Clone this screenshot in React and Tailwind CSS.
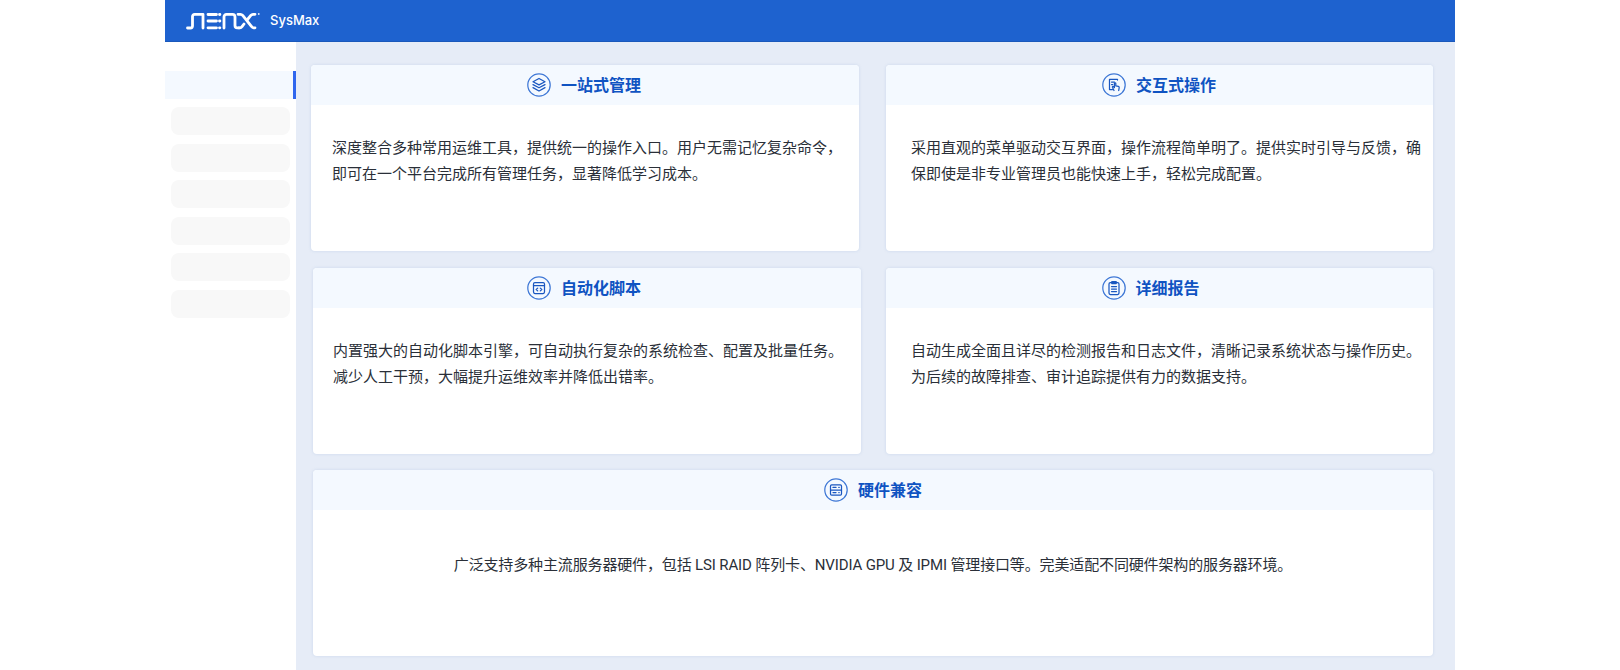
const CJK = "font-['Inter','Noto_Sans_CJK_SC',sans-serif]";

function IconRing({ children }) {
  return (
    <svg width="24" height="24" viewBox="0 0 24 24" fill="none" stroke="#1a57c0" strokeWidth="1.25" strokeLinecap="round" strokeLinejoin="round" className="shrink-0">
      <circle cx="12" cy="12" r="11.2" stroke="#3f78d6" />
      {children}
    </svg>
  );
}

const icons = {
  layers: (
    <>
      <path d="M12 5.5l6 3.2-6 3.2-6-3.2z" />
      <path d="M6 11.6l6 3.2 6-3.2" />
      <path d="M6 14.6l6 3.4 6-3.4" />
    </>
  ),
  touch: (
    <>
      <path d="M15.5 7V6.4H7.5v10.2h3" />
      <path d="M9.5 9h3M9.5 11.5h1.2" />
      <path d="M12 17.5l-1.6-3.2c-.3-.8.6-1.3 1.1-.7l.9 1v-4c0-1 1.4-1 1.4 0v2.2l2.6.6c.6.2.9.6.8 1.2l-.5 2.9" />
    </>
  ),
  code: (
    <>
      <rect x="6.5" y="6.5" width="11" height="11" rx="1.4" />
      <path d="M6.5 9.5h11" />
      <path d="M10.7 12.1l-1.5 1.4 1.5 1.4M13.3 12.1l1.5 1.4-1.5 1.4" />
    </>
  ),
  report: (
    <>
      <rect x="7" y="6.5" width="10" height="12" rx="1.4" />
      <path d="M9.8 5.6h4.4v2h-4.4z" />
      <path d="M9.5 10.5h5M9.5 13h5M9.5 15.5h5" />
    </>
  ),
  server: (
    <>
      <rect x="6.5" y="6.8" width="11" height="10.4" rx="1.2" />
      <path d="M6.5 12h11" />
      <path d="M9 9.4h3M9 14.6h3M14.8 9.4h.4M14.8 14.6h.4" />
    </>
  ),
};

function Card({ icon, title, className, bodyClass, titleClass, headClass, children }) {
  return (
    <section className={`bg-white rounded-[4px] overflow-hidden shadow-[0_0_3px_rgba(120,150,205,0.25)] ${className}`}>
      <header className={`h-[40px] bg-[#f4f9ff] flex items-center justify-center gap-[10px] ${headClass}`}>
        <IconRing>{icons[icon]}</IconRing>
        <h2 className={`text-[16px] leading-[24px] font-bold text-[#0f53c2] ${titleClass}`}>{title}</h2>
      </header>
      <p className={`font-['Roboto','Noto_Sans_CJK_SC',sans-serif] text-[15px] leading-[26px] text-[#2a2f38] ${bodyClass}`}>{children}</p>
    </section>
  );
}

function Logo() {
  return (
    <svg width="74" height="18" viewBox="0 0 74 18" fill="none" stroke="#fff" strokeWidth="2.8" strokeLinecap="round" strokeLinejoin="round">
      <path d="M1.5 16h3c1.4 0 2-.8 2-2V4.5c0-1.4.8-2.2 2.2-2.2h8.3V16" />
      <path d="M22 2.5h8.5M22 9h8.5M22 15.8h8.5" />
      <path d="M33.5 2.5h.4M33.5 9h.4M33.5 15.8h.4" />
      <path d="M38 16V5c0-1.6.9-2.6 2.5-2.6h6c1.6 0 2.5 1 2.5 2.6v8.5c0 1.6.8 2.4 2.2 2.4H53" />
      <path d="M52 2.3h2.5c1 0 1.6.4 2.2 1.1l8.5 10.8c.6.8 1.2 1.6 2.3 1.6h1.5" />
      <path d="M69 2.3h-2c-1 0-1.6.4-2.2 1.1L61.5 7.5M58 12l-1.8 2.4c-.6.8-1.2 1.5-2.2 1.5h-1" />
      <circle cx="72.6" cy="2" r=".4" strokeWidth="1" />
    </svg>
  );
}

export default function App() {
  return (
    <div className={`w-[1620px] h-[670px] bg-white overflow-hidden ${CJK}`}>
      <div className="w-[1290px] h-full ml-[165px] flex flex-col">
        <header className="h-[42px] shrink-0 bg-[#1e62cf] border-b border-[#1a58bb] flex items-center pl-[21px] gap-[10px]">
          <Logo />
          <span className="text-[13px] font-medium text-white">SysMax</span>
        </header>
        <div className="flex flex-1 min-h-0">
          <aside className="w-[131px] shrink-0 pt-[29px] bg-white">
            <div className="h-[28px] bg-[#f4f9ff] border-r-[3px] border-[#2f66ee]" />
            <div className="mt-[8px] px-[6px] flex flex-col gap-[8.6px]">
              <div className="h-[28px] rounded-lg bg-[#f8f8f8]" />
              <div className="h-[28px] rounded-lg bg-[#f8f8f8]" />
              <div className="h-[28px] rounded-lg bg-[#f8f8f8]" />
              <div className="h-[28px] rounded-lg bg-[#f8f8f8]" />
              <div className="h-[28px] rounded-lg bg-[#f8f8f8]" />
              <div className="h-[28px] rounded-lg bg-[#f8f8f8]" />
            </div>
          </aside>
          <main className="flex-1 bg-[#e6ecf7] pt-[23px] pr-[22px] flex flex-col gap-[16px]">
            <div className="flex gap-[27px] pl-[15px]">
              <Card className="w-[548px] h-[186px]" headClass="pr-[2px]" bodyClass="pt-[30px] pl-[21px] pr-[10px]" icon="layers" title="一站式管理">深度整合多种常用运维工具，提供统一的操作入口。用户无需记忆复杂命令，即可在一个平台完成所有管理任务，显著降低学习成本。</Card>
              <Card className="w-[547px] h-[186px]" headClass="pr-[1px]" bodyClass="pt-[30px] pl-[25px] pr-[5px]" icon="touch" title="交互式操作">采用直观的菜单驱动交互界面，操作流程简单明了。提供实时引导与反馈，确保即使是非专业管理员也能快速上手，轻松完成配置。</Card>
            </div>
            <div className="flex gap-[25px] pl-[17px] mt-[1px]">
              <Card className="w-[548px] h-[186px]" headClass="pr-[6px]" bodyClass="pt-[30px] pl-[20px] pr-[10px]" icon="code" title="自动化脚本">内置强大的自动化脚本引擎，可自动执行复杂的系统检查、配置及批量任务。减少人工干预，大幅提升运维效率并降低出错率。</Card>
              <Card className="w-[547px] h-[186px]" headClass="pr-[2px]" titleClass="min-w-[80px]" bodyClass="pt-[30px] pl-[25px] pr-[5px]" icon="report" title="详细报告">自动生成全面且详尽的检测报告和日志文件，清晰记录系统状态与操作历史。为后续的故障排查、审计追踪提供有力的数据支持。</Card>
            </div>
            <div className="pl-[17px]">
              <Card className="w-[1120px] h-[186px]" bodyClass="pt-[42px] text-center tracking-[-0.14px]" icon="server" title="硬件兼容">广泛支持多种主流服务器硬件，包括 LSI RAID 阵列卡、NVIDIA GPU 及 IPMI 管理接口等。完美适配不同硬件架构的服务器环境。</Card>
            </div>
          </main>
        </div>
      </div>
    </div>
  );
}
